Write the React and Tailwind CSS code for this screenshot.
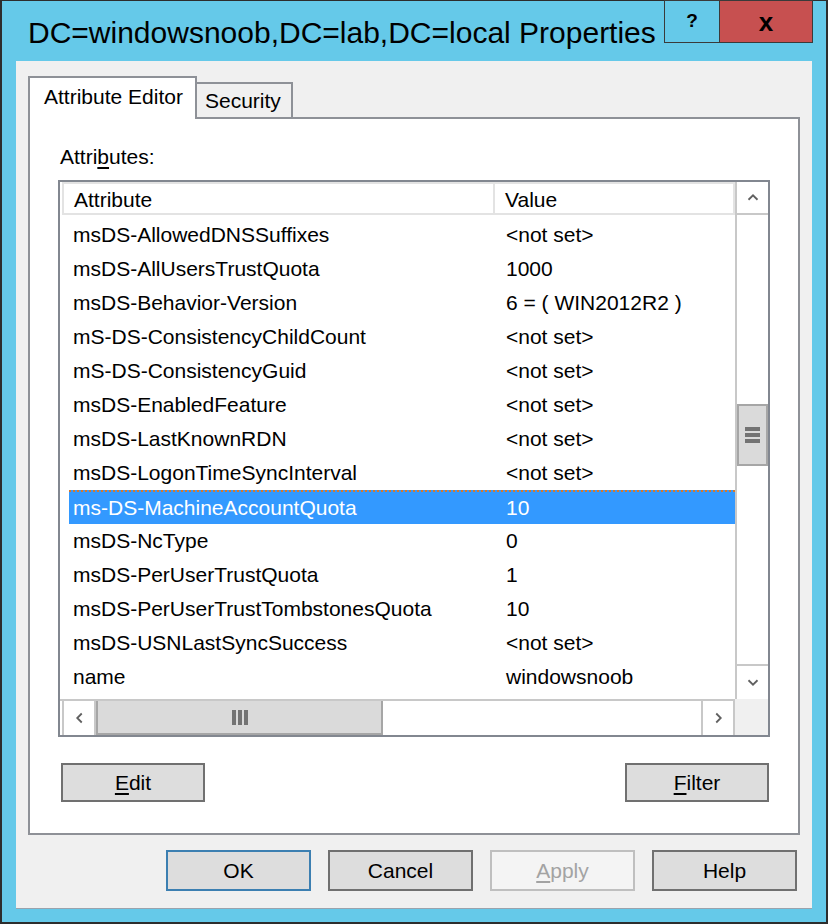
import React from "react";

const rows = [
  ["msDS-AllowedDNSSuffixes", "<not set>"],
  ["msDS-AllUsersTrustQuota", "1000"],
  ["msDS-Behavior-Version", "6 = ( WIN2012R2 )"],
  ["mS-DS-ConsistencyChildCount", "<not set>"],
  ["mS-DS-ConsistencyGuid", "<not set>"],
  ["msDS-EnabledFeature", "<not set>"],
  ["msDS-LastKnownRDN", "<not set>"],
  ["msDS-LogonTimeSyncInterval", "<not set>"],
  ["ms-DS-MachineAccountQuota", "10"],
  ["msDS-NcType", "0"],
  ["msDS-PerUserTrustQuota", "1"],
  ["msDS-PerUserTrustTombstonesQuota", "10"],
  ["msDS-USNLastSyncSuccess", "<not set>"],
  ["name", "windowsnoob"],
];

const SELECTED = 8;

const Chevron = ({ dir }) => {
  const d = {
    up: "M1 6 L5 2 L9 6",
    down: "M1 2 L5 6 L9 2",
    left: "M6 1 L2 5 L6 9",
    right: "M2 1 L6 5 L2 9",
  }[dir];
  const vert = dir === "up" || dir === "down";
  return (
    <svg
      width={vert ? 14 : 9}
      height={vert ? 9 : 14}
      viewBox={vert ? "0 0 10 8" : "0 0 8 10"}
      fill="none"
      stroke="#606060"
      strokeWidth="1.6"
    >
      <path d={d} />
    </svg>
  );
};

const DlgButton = ({ children, className = "", disabled, primary }) => (
  <div
    className={`flex items-center justify-center text-[21px] ${
      disabled
        ? "bg-[#f4f4f4] border-2 border-[#bfbfbf] text-[#a3a3a3]"
        : primary
        ? "bg-[#dddddd] border-2 border-[#3c7fb1] text-black"
        : "bg-[#dddddd] border-2 border-[#707070] text-black"
    } ${className}`}
  >
    {children}
  </div>
);

export default function App() {
  return (
    <div
      className="w-[828px] h-[924px] bg-[#65c9e9] border-x-2 border-b-2 border-t border-[#2d2d2d] flex flex-col"
      style={{ fontFamily: '"Liberation Sans", Arial, sans-serif' }}
    >
      {/* title bar */}
      <div className="h-[60px] flex shrink-0">
        <div className="pl-[26px] pt-[13px] text-[30px] leading-[38px] text-black whitespace-nowrap">
          DC=windowsnoob,DC=lab,DC=local Properties
        </div>
        <div className="ml-auto mr-[13px] flex self-start -mt-px">
          <div className="w-[56px] h-[43px] border border-[#3a3a3a] flex items-center justify-center text-[19px] font-bold text-black">
            ?
          </div>
          <div className="w-[93px] h-[43px] border border-l-0 border-[#3a3a3a] bg-[#c75050] flex items-center justify-center text-[26px] font-bold text-black leading-none pt-[1px]">
            x
          </div>
        </div>
      </div>

      {/* client panel */}
      <div className="mx-[14px] h-[847px] bg-[#f0f0f0] shadow-[0_1px_0_#9aa3ad] flex flex-col px-[12px] pt-[15px]">
        {/* tabs */}
        <div className="flex items-end h-[41px]">
          <div className="relative z-10 w-[169px] h-[43px] -mb-[2px] bg-white border-2 border-b-0 border-[#8e9197] flex items-start pl-[14px] pt-[7px] text-[21px] leading-[24px] text-black">
            Attribute Editor
          </div>
          <div className="w-[96px] h-[35px] bg-[#f0f0f0] border-2 border-l-0 border-b-0 border-[#8e9197] flex items-start pl-[8px] pt-[5px] text-[21px] leading-[24px] text-black">
            Security
          </div>
        </div>

        {/* tab page */}
        <div className="h-[718px] bg-white border-2 border-[#8e9197] flex flex-col px-[28px]">
          <div className="pt-[26px] pl-[2px] text-[21px] leading-[24px] text-black">
            Attri<span className="underline underline-offset-[3px]">b</span>utes:
          </div>

          {/* list */}
          <div className="mt-[11px] h-[557px] border-2 border-[#828790] flex flex-col bg-white">
            <div className="flex h-[517px]">
              <div className="flex-1 flex flex-col pl-[2px] min-w-0">
                {/* header */}
                <div className="h-[33px] flex text-[21px] text-black shrink-0">
                  <div className="w-[431px] border-2 border-r-0 border-[#e3e3e3] flex items-center pl-[10px] pt-[3px]">
                    Attribute
                  </div>
                  <div className="flex-1 border-2 border-[#e3e3e3] flex items-center pl-[10px] pt-[3px]">
                    Value
                  </div>
                </div>
                {/* rows */}
                <div className="flex-1 overflow-hidden flex flex-col pt-[3px]">
                  {rows.map(([a, v], i) => (
                    <div
                      key={a}
                      className={`h-[34px] shrink-0 flex items-center text-[21px] whitespace-nowrap ${
                        i === SELECTED
                          ? "bg-[#3399ff] text-white ml-[7px] border-t-2 border-dotted border-[#d9782a]"
                          : "text-black"
                      }`}
                    >
                      <div className={`${i === SELECTED ? "w-[426px] pl-[4px]" : "w-[433px] pl-[11px]"}`}>
                        {a}
                      </div>
                      <div className="pl-[11px]">{v}</div>
                    </div>
                  ))}
                </div>
              </div>
              {/* vertical scrollbar */}
              <div className="w-[33px] border-l-2 border-[#c8c8c8] flex flex-col bg-white">
                <div className="h-[33px] border-b-2 border-[#c8c8c8] flex items-center justify-center">
                  <Chevron dir="up" />
                </div>
                <div className="h-[189px]" />
                <div className="h-[62px] bg-[#dadada] border-2 border-[#a6a6a6] flex flex-col items-center justify-center gap-[2px]">
                  <div className="w-[15px] h-[4px] bg-[#737373]" />
                  <div className="w-[15px] h-[4px] bg-[#737373]" />
                  <div className="w-[15px] h-[4px] bg-[#737373]" />
                </div>
                <div className="flex-1" />
                <div className="h-[35px] border-t-2 border-[#c8c8c8] flex items-center justify-center">
                  <Chevron dir="down" />
                </div>
              </div>
            </div>
            {/* horizontal scrollbar */}
            <div className="flex h-[36px]">
              <div className="flex-1 flex pl-[2px] border-t-2 border-[#c8c8c8]">
                <div className="w-[34px] border-l-2 border-r-2 border-[#c8c8c8] flex items-center justify-center">
                  <Chevron dir="left" />
                </div>
                <div className="w-[287px] bg-[#dadada] border-2 border-t-0 border-[#a6a6a6] flex items-center justify-center gap-[2px]">
                  <div className="w-[4px] h-[15px] bg-[#737373]" />
                  <div className="w-[4px] h-[15px] bg-[#737373]" />
                  <div className="w-[4px] h-[15px] bg-[#737373]" />
                </div>
                <div className="flex-1" />
                <div className="w-[34px] border-l-2 border-r-2 border-[#c8c8c8] flex items-center justify-center">
                  <Chevron dir="right" />
                </div>
              </div>
              <div className="w-[33px] bg-[#f0f0f0]" />
            </div>
          </div>

          {/* edit / filter */}
          <div className="mt-[26px] flex justify-between pl-[3px] pr-[1px]">
            <DlgButton className="w-[144px] h-[39px]">
              <span className="underline underline-offset-[3px]">E</span>dit
            </DlgButton>
            <DlgButton className="w-[144px] h-[39px]">
              <span className="underline underline-offset-[3px]">F</span>ilter
            </DlgButton>
          </div>
        </div>

        {/* dialog buttons */}
        <div className="mt-[15px] flex justify-end gap-[17px] pr-[3px]">
          <DlgButton primary className="w-[145px] h-[41px]">OK</DlgButton>
          <DlgButton className="w-[145px] h-[41px]">Cancel</DlgButton>
          <DlgButton disabled className="w-[145px] h-[41px]">
            <span>
              <span className="underline underline-offset-[3px]">A</span>pply
            </span>
          </DlgButton>
          <DlgButton className="w-[145px] h-[41px]">Help</DlgButton>
        </div>
      </div>
    </div>
  );
}
